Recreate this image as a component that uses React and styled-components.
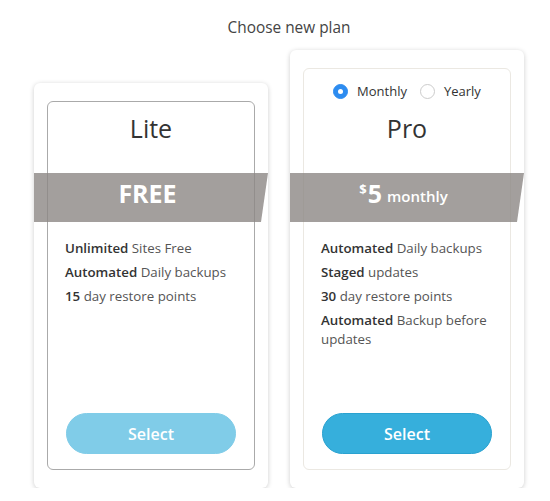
import React from 'react';
import styled, { createGlobalStyle } from 'styled-components';

const GlobalStyle = createGlobalStyle`
  body {
    margin: 0;
    background: #fff;
    font-family: 'Open Sans', 'Liberation Sans', sans-serif;
    color: #333;
  }
`;

const Page = styled.div`
  width: 550px;
  padding-top: 16px;
`;

const Heading = styled.h2`
  margin: 0 0 10px;
  padding-left: 28px;
  text-align: center;
  font-size: 15.4px;
  font-weight: 400;
  line-height: 24px;
  color: #444;
`;

const Plans = styled.div`
  display: flex;
  align-items: flex-end;
  gap: 22px;
  padding-left: 34px;
`;

const Card = styled.div`
  width: 234px;
  box-sizing: border-box;
  padding: 18px 13px;
  background: #fff;
  border-radius: 6px;
  box-shadow: 0 1px 5px rgba(0, 0, 0, 0.2);
`;

const Inner = styled.div`
  display: flex;
  flex-direction: column;
  padding: 12px 0 15px;
  border: 1px solid ${(p) => (p.$active ? '#ebe8e2' : '#aaa')};
  border-radius: 6px;
`;

const Periods = styled.div`
  display: flex;
  justify-content: center;
  gap: 13px;
  height: 20px;
  margin-bottom: 13px;
`;

const Period = styled.label`
  display: flex;
  align-items: center;
  gap: 9px;
  font-size: 13px;
  line-height: 20px;
  color: #333;
`;

const Radio = styled.span`
  width: 15px;
  height: 15px;
  box-sizing: border-box;
  border-radius: 50%;
  border: 1px solid ${(p) => (p.$checked ? '#2d8cf0' : '#ccc')};
  background: ${(p) => (p.$checked ? '#2d8cf0' : '#fff')};
  display: flex;
  align-items: center;
  justify-content: center;

  &::after {
    content: '';
    width: 5px;
    height: 5px;
    border-radius: 50%;
    background: ${(p) => (p.$checked ? '#fff' : 'transparent')};
  }
`;

const Title = styled.div`
  text-align: center;
  font-size: 25px;
  line-height: 28px;
  color: #333;
`;

const Ribbon = styled.div`
  margin: 31px -14px 0;
  height: 49px;
  padding-right: 7px;
  display: flex;
  align-items: center;
  justify-content: center;
  background: rgba(140, 135, 132, 0.8);
  clip-path: polygon(0 0, 100% 0, calc(100% - 7px) 100%, 0 100%);
  color: #fff;
`;

const Price = styled.span`
  font-size: 25px;
  font-weight: 700;
  line-height: 1;
  margin-top: -9px;
`;

const Currency = styled.sup`
  font-size: 13px;
  font-weight: 700;
  vertical-align: 9px;
  margin-right: 1px;
`;

const Term = styled.span`
  font-size: 15px;
  font-weight: 600;
  margin-left: 5px;
  margin-top: -3px;
`;

const Features = styled.ul`
  list-style: none;
  margin: 17px 0 0;
  padding: 0 14px 0 17px;
  height: 174px;
  box-sizing: border-box;
`;

const Feature = styled.li`
  font-size: 13.3px;
  line-height: 19px;
  color: #555;
  margin-bottom: 5px;

  b {
    font-weight: 600;
    color: #333;
  }
`;

const SelectButton = styled.button`
  align-self: center;
  width: 170px;
  height: 41px;
  border-radius: 21px;
  border: 1px solid ${(p) => (p.$muted ? '#80cce8' : '#2aa2d0')};
  background: ${(p) => (p.$muted ? '#80cce8' : '#36afdc')};
  color: #fff;
  font-family: inherit;
  font-size: 16px;
  font-weight: 600;
  cursor: pointer;
`;

const App = () => (
  <Page>
    <GlobalStyle />
    <Heading>Choose new plan</Heading>
    <Plans>
      <Card>
        <Inner>
          <Title>Lite</Title>
          <Ribbon>
            <Price>FREE</Price>
          </Ribbon>
          <Features>
            <Feature><b>Unlimited</b> Sites Free</Feature>
            <Feature><b>Automated</b> Daily backups</Feature>
            <Feature><b>15</b> day restore points</Feature>
          </Features>
          <SelectButton $muted>Select</SelectButton>
        </Inner>
      </Card>
      <Card>
        <Inner $active>
          <Periods>
            <Period><Radio $checked />Monthly</Period>
            <Period><Radio />Yearly</Period>
          </Periods>
          <Title>Pro</Title>
          <Ribbon>
            <Price><Currency>$</Currency>5</Price>
            <Term>monthly</Term>
          </Ribbon>
          <Features>
            <Feature><b>Automated</b> Daily backups</Feature>
            <Feature><b>Staged</b> updates</Feature>
            <Feature><b>30</b> day restore points</Feature>
            <Feature><b>Automated</b> Backup before updates</Feature>
          </Features>
          <SelectButton>Select</SelectButton>
        </Inner>
      </Card>
    </Plans>
  </Page>
);

export default App;
